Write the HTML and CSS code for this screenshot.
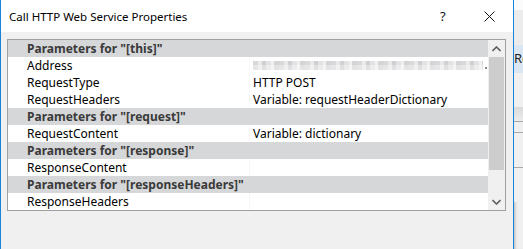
FILE: index.html
```html
<!doctype html>
<html lang="en">
  <head>
    <meta charset="UTF-8">
    <title>Call HTTP Web Service Properties</title>
    <link rel="stylesheet" href="styles.css">
  </head>
  <body>
    <div class="screen">
      <div class="dialog">
        <div class="titlebar">
          <span class="title">Call HTTP Web Service Properties</span>
          <span class="help">?</span>
          <span class="close">
            <svg width="11" height="11" viewBox="0 0 11 11"><path d="M0.5 0.5 L10.5 10.5 M10.5 0.5 L0.5 10.5" stroke="#111" stroke-width="1" fill="none"/></svg>
          </span>
        </div>

        <div class="body">
          <div class="grid">
            <div class="rows">
              <div class="row cat">Parameters for "[this]"</div>
              <div class="row prop"><span class="name">Address</span><span class="value"><span class="blur"></span><span class="dot"></span></span></div>
              <div class="row prop"><span class="name">RequestType</span><span class="value">HTTP POST</span></div>
              <div class="row prop"><span class="name">RequestHeaders</span><span class="value">Variable: requestHeaderDictionary</span></div>
              <div class="row cat">Parameters for "[request]"</div>
              <div class="row prop"><span class="name">RequestContent</span><span class="value">Variable: dictionary</span></div>
              <div class="row cat">Parameters for "[response]"</div>
              <div class="row prop"><span class="name">ResponseContent</span><span class="value"></span></div>
              <div class="row cat">Parameters for "[responseHeaders]"</div>
              <div class="row prop"><span class="name">ResponseHeaders</span><span class="value"></span></div>
            </div>

            <div class="scrollbar">
              <div class="sb-btn">
                <svg width="9" height="6" viewBox="0 0 9 6"><path d="M0.5 5 L4.5 1 L8.5 5" stroke="#606060" stroke-width="1.6" fill="none"/></svg>
              </div>
              <div class="sb-thumb"></div>
              <div class="sb-track"></div>
              <div class="sb-btn">
                <svg width="9" height="6" viewBox="0 0 9 6"><path d="M0.5 1 L4.5 5 L8.5 1" stroke="#606060" stroke-width="1.6" fill="none"/></svg>
              </div>
            </div>
          </div>
        </div>
      </div>

      <!-- window behind the dialog, mostly hidden -->
      <div class="behind">
        <div class="bh-top"></div>
        <div class="bh-bar"></div>
        <div class="bh-tab">Re</div>
        <div class="bh-pane"></div>
        <div class="bh-head"></div>
        <div class="bh-line"></div>
        <div class="bh-pane small"></div>
        <div class="bh-line"></div>
        <div class="bh-pane"></div>
        <div class="bh-line"></div>
        <div class="bh-pane"></div>
      </div>
    </div>
  </body>
</html>
```

FILE: styles.css
```css
* {
  box-sizing: border-box;
}

html, body {
  margin: 0;
  padding: 0;
}

body {
  font-family: "Noto Sans", "DejaVu Sans", sans-serif;
  font-size: 12px;
  color: #000;
  background: #f0f0f0;
}

.screen {
  display: flex;
  width: 523px;
  height: 249px;
  overflow: hidden;
}

.dialog {
  width: 514px;
  height: 249px;
  flex: none;
  display: flex;
  flex-direction: column;
  border-left: 1px solid #1883d7;
  border-right: 1px solid #1883d7;
  background: #f0f0f0;
}

/* title bar */
.titlebar {
  height: 32px;
  flex: none;
  display: flex;
  align-items: center;
  background: #fff;
  padding-left: 8px;
}

.title {
  flex: 1;
  font-size: 11.5px;
  color: #000;
}

.help {
  width: 8px;
  margin-right: 36px;
  font-size: 13px;
  color: #111;
}

.close {
  display: flex;
  width: 11px;
  height: 11px;
  margin-right: 18px;
}

/* property grid */
.body {
  flex: 1;
  padding: 7px 0 0 6px;
}

.grid {
  display: flex;
  width: 499px;
  height: 172px;
  border: 1px solid #a0a0a0;
  background: #fff;
}

.rows {
  width: 480px;
  display: flex;
  flex-direction: column;
}

.row {
  height: 17px;
  line-height: 17px;
  display: flex;
  white-space: nowrap;
}

.row.cat {
  background: #d6d7d9;
  font-weight: bold;
  color: #3a3a3a;
  padding-left: 19px;
}

.row.prop .name {
  width: 242px;
  padding-left: 19px;
  border-right: 1px solid #f7f7f7;
}

.row.prop .value {
  flex: 1;
  display: flex;
  align-items: center;
  padding-left: 3px;
}

.blur {
  width: 230px;
  height: 9px;
  background:
    linear-gradient(180deg, rgba(255,255,255,0) 0 4px, rgba(255,255,255,0.35) 4px 9px),
    repeating-linear-gradient(90deg, #d9d9dc 0 5px, #e9e9ea 5px 9px, #cfd0d3 9px 13px, #e2e2e4 13px 18px, #f0f0f1 18px 21px, #d4d4d6 21px 26px);
}

.dot {
  width: 2px;
  height: 2px;
  margin: 5px 0 0 2px;
  background: #8a8a8a;
}

/* scrollbar */
.scrollbar {
  width: 17px;
  display: flex;
  flex-direction: column;
  background: #f0f0f0;
}

.sb-btn {
  height: 17px;
  display: flex;
  align-items: center;
  justify-content: center;
}

.sb-thumb {
  height: 113px;
  margin: 0 1px;
  background: #cdcdcd;
}

.sb-track {
  flex: 1;
}

/* window behind */
.behind {
  flex: 1;
  display: flex;
  flex-direction: column;
  background: #f0f0f0;
  box-shadow: inset 3px 0 3px -2px rgba(0,0,0,0.25);
}

.bh-top {
  height: 10px;
  background: #fbfbfb;
}

.bh-bar {
  height: 35px;
  background: #ececec;
}

.bh-tab {
  height: 28px;
  line-height: 26px;
  background: #dae6f2;
  white-space: nowrap;
  font-size: 13px;
  color: #222;
  overflow: hidden;
}

.bh-pane {
  height: 34px;
  background: #f0f0f0;
}

.bh-pane.small {
  height: 10px;
}

.bh-head {
  height: 14px;
  background: linear-gradient(#dadada, #ececec);
}

.bh-line {
  height: 1px;
  background: #a8a8a8;
}
```
